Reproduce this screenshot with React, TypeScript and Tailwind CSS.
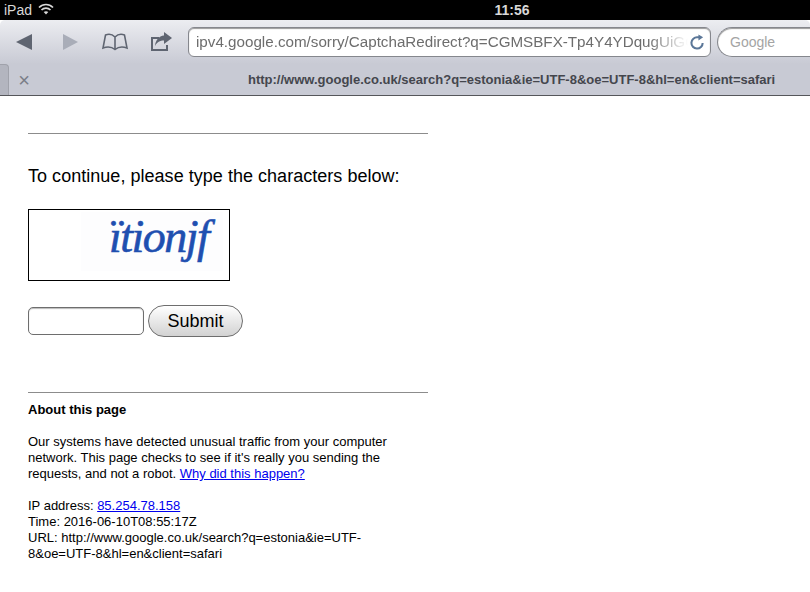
const sans = "font-['Liberation_Sans',Arial,sans-serif]";

function Toolbar() {
  return (
    <div className="flex h-[44px] items-center overflow-hidden rounded-t-[5px] bg-gradient-to-b from-[#eceDf1] to-[#c8cad4] pl-4">
      <svg width="16" height="16" viewBox="0 0 16 16" className="shrink-0">
        <path d="M0 8 L16 0 V16 Z" fill="#5f6571" />
      </svg>
      <svg width="15" height="16" viewBox="0 0 15 16" className="ml-[31px] shrink-0">
        <path d="M15 8 L0 0 V16 Z" fill="#a9adb8" />
      </svg>
      <svg width="26" height="18" viewBox="0 0 26 18" className="ml-[24px] shrink-0" fill="none" stroke="#5f6571" strokeWidth="1.6">
        <path d="M13 4 C10 1 6 1 3.5 2 L1 15 C5 13.5 10 14 13 16.5 C16 14 21 13.5 25 15 L22.5 2 C20 1 16 1 13 4 Z M13 4 V16" />
      </svg>
      <svg width="24" height="20" viewBox="0 0 24 20" className="ml-[21px] shrink-0">
        <path d="M2 5 H10 V7 H4 V17 H17 V13 H19 V19 H2 Z" fill="#5f6571" />
        <path d="M15 0 L23 6 L15 12 V8.5 C11 8.5 8 10 6 14 C6.5 8 10 4 15 3.5 Z" fill="#5f6571" />
      </svg>
      <div className="ml-[15px] flex h-[30px] w-[523px] shrink-0 items-center rounded-[6px] border border-[#85878d] bg-white pl-[7px] pr-[5px] shadow-[inset_0_1px_1px_#999]">
        <span className="min-w-0 flex-1 overflow-hidden whitespace-nowrap text-[15.2px] text-[#6d6d6d] [mask-image:linear-gradient(to_left,transparent,black_40px)]">
          ipv4.google.com/sorry/CaptchaRedirect?q=CGMSBFX-Tp4Y4YDqugUiGCAE
        </span>
        <svg width="15" height="16" viewBox="0 0 16 16" className="ml-[2px] shrink-0" fill="none">
          <path d="M13.5 9 A6 6 0 1 1 8 3 H10" stroke="#5b7798" strokeWidth="2.2" />
          <path d="M9 0 L14 3 L9 6.5 Z" fill="#5b7798" />
        </svg>
      </div>
      <div className="ml-[6px] flex h-[30px] w-[120px] shrink-0 items-center rounded-l-[15px] border border-r-0 border-[#85878d] bg-white pl-[12px] text-[14px] text-[#a4a4a4] shadow-[inset_0_1px_1px_#999]">
        Google
      </div>
    </div>
  );
}

function TabRow() {
  return (
    <div className="flex h-[32px] items-center border-b border-[#55565a] bg-[#c8cad4]">
      <div className="h-full w-[9px] shrink-0 self-end rounded-tr-[4px] border-r border-t border-[#a0a2ab] bg-[#b3b5bf]" />
      <span className="ml-[9px] w-[12px] shrink-0 text-center text-[20px] leading-none text-[#7a7d87]">×</span>
      <span className="ml-[218px] whitespace-nowrap text-[13px] font-bold text-[#44464d]">
        http://www.google.co.uk/search?q=estonia&amp;ie=UTF-8&amp;oe=UTF-8&amp;hl=en&amp;client=safari
      </span>
    </div>
  );
}

export default function App() {
  return (
    <div className={`h-[592px] w-[810px] overflow-hidden bg-white ${sans}`}>
      <div className="relative flex h-[20px] items-center justify-center bg-black text-[14px] font-bold text-[#d8d8d8]">
        <span className="absolute left-[4px] top-[1px] text-[14px] font-normal leading-[18px]">iPad</span>
        <svg width="16" height="12" viewBox="0 0 16 12" fill="none" stroke="#d8d8d8" strokeWidth="1.7" className="absolute left-[38px] top-[3px]">
          <path d="M1 4.5 C5 0.5 11 0.5 15 4.5 M3.5 7 C6 4.5 10 4.5 12.5 7" />
          <path d="M8 11.5 L5.7 9 C7 8 9 8 10.3 9 Z" fill="#d8d8d8" stroke="none" />
        </svg>
        <span className="ml-[214px]">11:56</span>
      </div>
      <Toolbar />
      <TabRow />

      <main className="ml-[28px] w-[400px] text-black">
        <hr className="mt-[37px] border-t border-[#8c8c8c]" />
        <p className="mt-[32px] text-[18px] leading-[21px] tracking-[0.03px]">To continue, please type the characters below:</p>
        <div className="relative mt-[22px] h-[72px] w-[202px] overflow-hidden border border-black">
          <div className="absolute left-[52px] top-[2px] h-[59px] w-[142px] overflow-hidden bg-[#fdfdfe]">
            <span className="absolute left-[28px] top-[-4px] whitespace-nowrap font-['Liberation_Serif',serif] text-[46px] italic leading-[58px] tracking-[-1.5px] text-[#1f4fb0] [-webkit-text-stroke:0.6px_#1f4fb0]">
              ïtionjf
            </span>
          </div>
        </div>
        <div className="mt-[24px] flex items-center gap-[4px]">
          <input className="h-[28px] w-[116px] rounded-[5px] border border-[#6e6e6e] bg-white shadow-[inset_0_1px_1px_#bbb]" />
          <button className="h-[32px] w-[95px] rounded-[16px] border border-[#6e6e6e] bg-gradient-to-b from-white to-[#d2d2d2] text-[18px] text-black">
            Submit
          </button>
        </div>
        <hr className="mt-[55px] border-t border-[#8c8c8c]" />
        <div className="mt-[9px] text-[13px] leading-[16px]">
          <p className="font-bold">About this page</p>
          <p className="mt-[16px] w-[380px]">
            Our systems have detected unusual traffic from your computer network. This page checks to see if it's really you sending the requests, and not a robot.{" "}
            <a href="#" className="text-[#0000ee] underline">Why did this happen?</a>
          </p>
          <p className="mt-[16px]">
            IP address: <a href="#" className="text-[#0000ee] underline">85.254.78.158</a>
            <br />
            Time: 2016-06-10T08:55:17Z
            <br />
            URL: http://www.google.co.uk/search?q=estonia&amp;ie=UTF-
            <br />
            8&amp;oe=UTF-8&amp;hl=en&amp;client=safari
          </p>
        </div>
      </main>
    </div>
  );
}
